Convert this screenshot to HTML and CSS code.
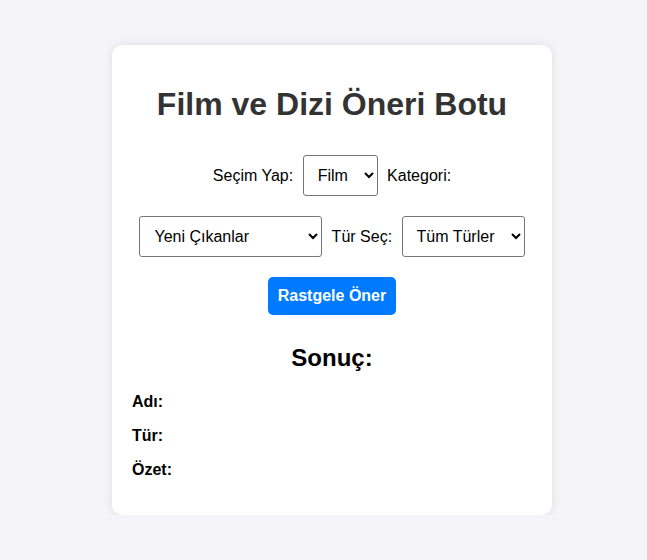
FILE: index.html
```html
<!DOCTYPE html>
<html lang="tr">
<head>
	<meta charset="utf-8">
	<title>Film ve Dizi Öneri Botu</title>
	<link rel="stylesheet" href="styles.css">
</head>
<body>
<div class="container">
	<h1>Film ve Dizi Öneri Botu</h1>

	<div class="controls">
		<label for="type">Seçim Yap:</label>
		<select id="type" class="sel-type">
			<option>Film</option>
			<option>Dizi</option>
		</select>

		<label for="category">Kategori:</label>
		<select id="category" class="sel-category">
			<option>Yeni Çıkanlar</option>
			<option>En Popüler</option>
			<option>En Yüksek Puanlılar</option>
		</select>

		<label for="genre">Tür Seç:</label>
		<select id="genre" class="sel-genre">
			<option>Tüm Türler</option>
			<option>Aksiyon</option>
			<option>Komedi</option>
			<option>Dram</option>
		</select>
	</div>

	<div class="actions">
		<button type="button" id="suggest">Rastgele Öner</button>
	</div>

	<div class="result">
		<h2>Sonuç:</h2>
		<p><strong>Adı:</strong> <span id="name"></span></p>
		<p><strong>Tür:</strong> <span id="genreOut"></span></p>
		<p><strong>Özet:</strong> <span id="summary"></span></p>
	</div>
</div>
</body>
</html>
```

FILE: styles.css
```css
body{
	margin: 0;
	padding: 45px 0 0 17px;
	background-color: #f4f4f9;
	font-family: Arial, "Liberation Sans", sans-serif;
	color: #000;
}
.container{
	width: 400px;
	margin: 0 auto;
	padding: 20px;
	background-color: #fff;
	border-radius: 10px;
	box-shadow: 0 0 10px rgba(0,0,0,0.1);
	text-align: center;
}
h1{
	font-size: 32px;
	color: #333;
	margin: 21px 0 22px;
}
.controls{
	font-size: 16px;
}
select{
	font-family: Arial, "Liberation Sans", sans-serif;
	font-size: 16px;
	padding: 10px;
	margin: 10px 5px;
	border: 1px solid #767676;
	border-radius: 3px;
	background-color: #fff;
	color: #000;
}
.sel-type{
	width: 75px;
}
.sel-category{
	width: 183px;
}
.sel-genre{
	width: 123px;
}
button{
	font-family: Arial, "Liberation Sans", sans-serif;
	font-size: 16px;
	font-weight: bold;
	color: #fff;
	background-color: #007bff;
	border: none;
	border-radius: 5px;
	padding: 10px;
	white-space: nowrap;
	margin: 10px 0;
	cursor: pointer;
}
.result{
	text-align: left;
}
.result h2{
	text-align: center;
	font-size: 24px;
	margin: 19px 0 21px;
}
.result p{
	margin: 16px 0;
}
```
